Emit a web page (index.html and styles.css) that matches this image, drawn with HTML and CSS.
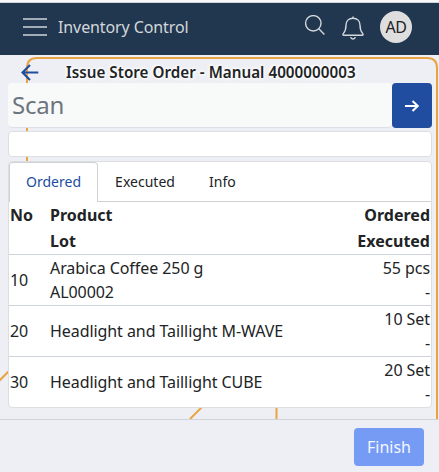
FILE: index.html
```html
<!DOCTYPE html>
<html lang="en">
<head>
<meta charset="utf-8">
<title>Inventory Control</title>
<link rel="stylesheet" href="styles.css">
</head>
<body>
<div class="app">
  <header class="navbar">
    <svg class="menu-icon" width="24" height="20" viewBox="0 0 24 20"><path d="M0 2h24M0 10h24M0 18h24"/></svg>
    <span class="brand">Inventory Control</span>
    <svg class="search-icon" width="20" height="20" viewBox="0 0 20 20"><circle cx="8.3" cy="8.3" r="7.7"/><path d="M13.800 13.800l5.600 5.600"/></svg>
    <svg class="bell-icon" width="22" height="24" viewBox="0 0 22 24"><path d="M11 0.500v1.800M11 2.300c-4.400 0-7 3-7 7 0 5-.9 6.300-2.700 8.300-.7.8-.5 1.600.6 1.600h18.200c1.100 0 1.300-.8.6-1.600C18.900 15.600 18 14.300 18 9.300c0-4-2.600-7-7-7zM8.700 21c.2 1.300 1.100 2 2.300 2s2.100-.7 2.300-2"/></svg>
    <span class="avatar">AD</span>
  </header>
  <main class="content">
    <svg class="pattern" width="439" height="364" viewBox="0 0 439 364"><path d="M27 140V13Q27 3 37 3H427Q437 3 437 13V364M-2 327L27 298M190 364L220 334M276.500 334V364"/></svg>
    <div class="title-row">
      <svg class="back-icon" width="18" height="17" viewBox="0 0 18 17"><path d="M17.300 8.500H1.500M9 1L1.500 8.500 9 16"/></svg>
      <h1>Issue Store Order - Manual 4000000003</h1>
    </div>
    <div class="scan-row">
      <input class="scan-input" placeholder="Scan" aria-label="Scan">
      <button class="go" aria-label="Submit"><svg width="14" height="12" viewBox="0 0 14 12"><path d="M0 6h12.700M7.500 1l5.200 5-5.200 5"/></svg></button>
    </div>
    <div class="message"></div>
    <section class="card">
      <nav class="tabs">
        <a class="tab active">Ordered</a><a class="tab">Executed</a><a class="tab">Info</a>
      </nav>
      <div class="row head"><span>No</span><div>Product<br>Lot</div><div class="qty">Ordered<br>Executed</div></div>
      <div class="row"><span>10</span><div>Arabica Coffee 250 g<br>AL00002</div><div class="qty">55 pcs<br>-</div></div>
      <div class="row"><span>20</span><div>Headlight and Taillight M-WAVE</div><div class="qty">10 Set<br>-</div></div>
      <div class="row"><span>30</span><div>Headlight and Taillight CUBE</div><div class="qty">20 Set<br>-</div></div>
    </section>
  </main>
  <footer class="footer"><button class="finish">Finish</button></footer>
</div>
</body>
</html>
```
FILE: styles.css
```css
* { box-sizing: border-box; }
body { margin: 0; background: #eeeff4; color: #212325; font: 16px/24px "Noto Sans", sans-serif; letter-spacing: -0.07px; }
button { border: 0; padding: 0; font: inherit; }
svg { fill: none; flex: none; display: block; }
.app { height: 472px; display: flex; flex-direction: column; overflow: hidden; border-top: 2px solid #f8f8f9; }
.navbar { height: 53px; border-top: 1px solid #d3d5d8; background: #21374f; display: flex; align-items: center; padding: 0 27px 4px 23px; color: #d3d7dc; }
.menu-icon { stroke: #a3adb8; stroke-width: 1.8; }
.brand { margin-left: 11px; flex: 1; white-space: nowrap; letter-spacing: -0.1px; }
.search-icon { stroke: #d3d7dc; stroke-width: 1.4; margin: 0 18px 4px 0; }
.bell-icon { stroke: #d3d7dc; stroke-width: 1.4; margin: 1px 16px 0 0; }
.search-icon { margin-right: 17.500px; }
.avatar { width: 32px; height: 32px; border-radius: 50%; background: #dedede; color: #222; text-align: center; line-height: 32px; letter-spacing: -0.5px; }
.content { height: 364px; padding: 4px 7px 0 8px; position: relative; }
.pattern { position: absolute; left: 0; top: 0; stroke: #eaa343; stroke-width: 2; }
.content > :not(.pattern) { position: relative; }
.title-row { height: 24px; display: flex; align-items: center; padding-left: 13px; }
.back-icon { stroke: #204da0; stroke-width: 2.2; margin-top: 2px; }
h1 { margin: 1px 0 0 27px; font-size: 15.2px; line-height: 20px; font-weight: 600; letter-spacing: 0.03px; white-space: nowrap; text-shadow: 0 0 3px #fff, 1px 1px 3px #fff, -1px -1px 3px #fff; }
.scan-row { height: 45px; display: flex; }
.scan-input { flex: 1; min-width: 0; border: 0; border-bottom: 1px solid #dcdfe8; border-radius: 4px; background: #f8faf9; padding: 0 4px 2px; font: 24px "Noto Sans", sans-serif; letter-spacing: -0.2px; }
.scan-input::placeholder { color: #6d757c; opacity: 1; }
.go { width: 40px; border-radius: 4px; background: #204da0; display: grid; place-items: center; }
.go svg { stroke: #fff; stroke-width: 2; }
.message { height: 26px; margin-top: 3px; width: 424px; background: #fff; border: 1px solid #dcdee1; border-radius: 4px; }
.card { height: 247px; margin-top: 4px; width: 424px; background: #fff; border: 1px solid #dcdee1; border-radius: 4px; overflow: hidden; }
.tabs { height: 40px; border-bottom: 1px solid #cfd2d5; display: flex; font-size: 14px; letter-spacing: 0.02px; }
.tab { height: 40px; padding: 8px 17px; line-height: 24px; }
.tab.active { color: #204da0; padding: 7px 16px; border: 1px solid #cfd2d5; border-bottom: 0; border-radius: 4px 4px 0 0; background: #fff; }
.row { height: 51px; display: grid; grid-template-columns: 40px 1fr auto; align-items: center; padding: 0 1px; border-bottom: 1px solid #ced4da; }
.row:last-child { border-bottom: 0; padding-bottom: 1px; }
.head { height: 53px; font-weight: 700; line-height: 26px; letter-spacing: 0; align-items: start; }
.qty { text-align: right; }
.footer { height: 53px; border-top: 1px solid #ced4da; background: #eeeff4; position: relative; padding: 8px 15px; display: flex; justify-content: flex-end; }
.finish { width: 70px; height: 38px; border-radius: 4px; background: #759bf5; color: #f4f7ff; }
```
